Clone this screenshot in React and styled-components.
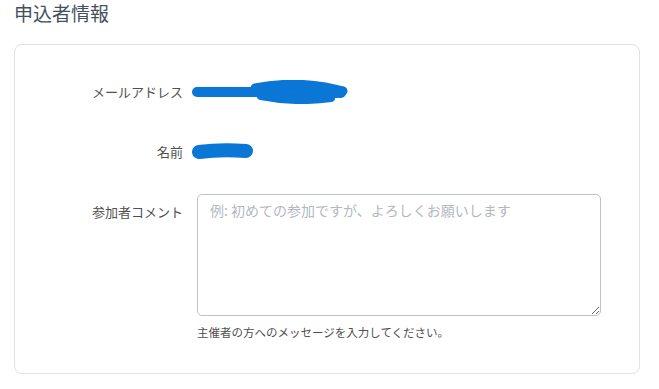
import React from 'react';
import styled, { createGlobalStyle } from 'styled-components';

const GlobalStyle = createGlobalStyle`
  html, body {
    margin: 0;
    padding: 0;
    background: #fff;
  }
  body {
    font-family: "Noto Sans CJK JP", "Noto Sans", sans-serif;
    color: #555;
  }
`;

const Page = styled.div`
  padding: 0 19px 0 14px;
  box-sizing: border-box;
  width: 659px;
`;

const Title = styled.h2`
  margin: 0 0 18px;
  font-size: 19px;
  line-height: 26px;
  font-weight: 400;
  color: #45505d;
`;

const Card = styled.section`
  width: 626px;
  box-sizing: border-box;
  border: 1px solid #e2e2e2;
  border-radius: 8px;
  background: #fff;
  padding: 37px 38px 33px 0;
  display: grid;
  grid-template-columns: 168px 1fr;
  column-gap: 14px;
  row-gap: 0;
`;

const Label = styled.div`
  text-align: right;
  font-size: 13px;
  line-height: 20px;
  color: #505050;
  padding-top: ${(p) => p.$top || 0}px;
  margin-bottom: ${(p) => p.$gap || 0}px;
`;

const Value = styled.div`
  height: ${(p) => (p.$fixed ? '20px' : 'auto')};
  display: flex;
  flex-direction: column;
  align-items: flex-start;
  justify-content: center;
  margin-bottom: ${(p) => p.$gap || 0}px;
`;

const Redaction = styled.svg`
  display: block;
  flex: none;
  margin-left: -6px;
`;

const Comment = styled.textarea`
  width: 404px;
  height: 122px;
  box-sizing: border-box;
  border: 1.5px solid #bcc2c8;
  border-radius: 5px;
  padding: 5px 12px;
  font-family: "Noto Sans CJK JP", "Noto Sans", sans-serif;
  font-size: 14px;
  line-height: 20px;
  color: #333;
  resize: vertical;
  outline: none;
  &::placeholder {
    color: #b3b8bf;
  }
`;

const Help = styled.p`
  margin: 8px 0 0;
  font-size: 11.5px;
  line-height: 16px;
  color: #505050;
`;

const BLUE = '#0a76d6';

const EmailMask = () => (
  <Redaction width="162" height="24" viewBox="0 0 162 24">
    <g stroke={BLUE} strokeLinecap="round" strokeLinejoin="round" fill="none">
      <path d="M6 12 L60 12 L150 13" strokeWidth="10" />
      <path d="M64 8 Q100 1 134 7 L152 11" strokeWidth="9" />
      <path d="M70 16 Q105 23 140 18" strokeWidth="8" />
    </g>
  </Redaction>
);

const NameMask = () => (
  <Redaction width="64" height="20" viewBox="0 0 64 20">
    <path d="M8 10 Q30 7 55 9" stroke={BLUE} strokeWidth="14" strokeLinecap="round" fill="none" />
  </Redaction>
);

const App = () => {
  return (
    <Page>
      <GlobalStyle />
      <Title>申込者情報</Title>
      <Card>
        <Label $gap={40}>メールアドレス</Label>
        <Value $gap={40} $fixed>
          <EmailMask />
        </Value>

        <Label $gap={32}>名前</Label>
        <Value $gap={32} $fixed>
          <NameMask />
        </Value>

        <Label $top={8}>参加者コメント</Label>
        <Value>
          <Comment placeholder="例: 初めての参加ですが、よろしくお願いします" />
          <Help>主催者の方へのメッセージを入力してください。</Help>
        </Value>
      </Card>
    </Page>
  );
};

export default App;
